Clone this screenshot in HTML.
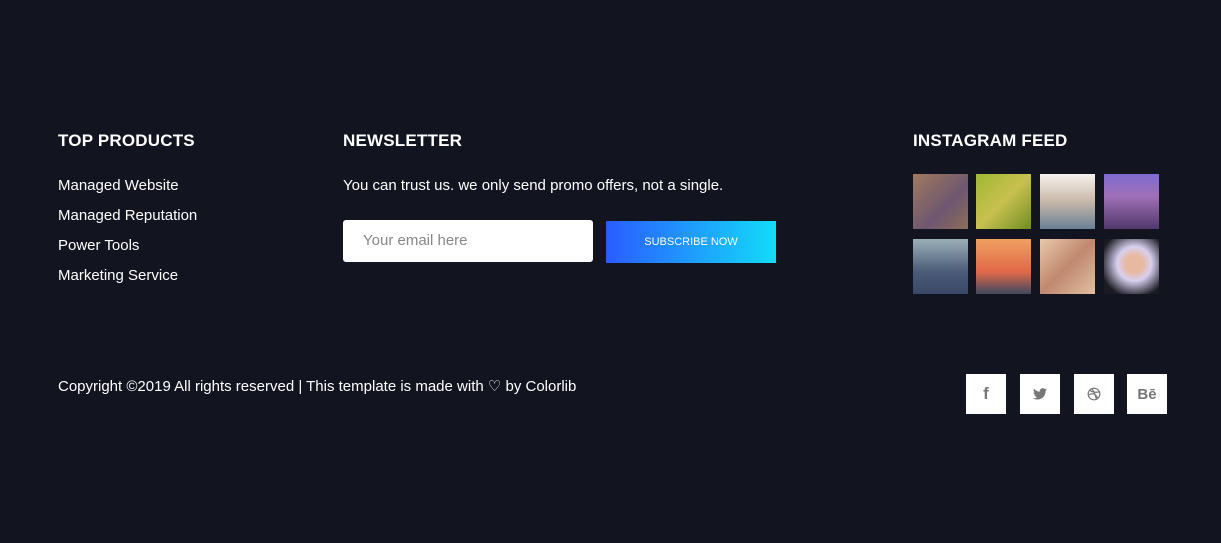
<!DOCTYPE html>
<html><head><meta charset="utf-8"><style>
*{margin:0;padding:0;box-sizing:border-box}
body{width:1221px;height:543px;background:#121420;font-family:"Liberation Sans",sans-serif;color:#fff;position:relative;overflow:hidden}
h4{position:absolute;top:131px;font-size:17px;font-weight:bold;letter-spacing:0.2px}
.a{position:absolute;font-size:15px;color:#fff}
.img{position:absolute;width:55px;height:55px}
.s{position:absolute;top:374px;width:40px;height:40px;background:#fff;color:#777;display:flex;align-items:center;justify-content:center;font-weight:bold;font-size:15px}
</style></head><body>
<h4 style="left:58px">TOP PRODUCTS</h4>
<div class="a" style="left:58px;top:177px">Managed Website</div>
<div class="a" style="left:58px;top:207px">Managed Reputation</div>
<div class="a" style="left:58px;top:237px">Power Tools</div>
<div class="a" style="left:58px;top:267px">Marketing Service</div>

<h4 style="left:343px">NEWSLETTER</h4>
<div class="a" style="left:343px;top:177px">You can trust us. we only send promo offers, not a single.</div>
<div style="position:absolute;left:343px;top:220px;width:250px;height:42px;background:#fff;border-radius:3px;color:#888;font-size:15px;padding:12px 0 0 20px">Your email here</div>
<div style="position:absolute;left:606px;top:221px;width:170px;height:42px;background:linear-gradient(90deg,#2a5cff,#12dcf8);font-size:11px;display:flex;align-items:center;justify-content:center">SUBSCRIBE NOW</div>

<h4 style="left:913px">INSTAGRAM FEED</h4>
<div class="img" style="left:913px;top:174px;background:linear-gradient(135deg,#a07a5e,#6e5670 60%,#8d6e56)"></div>
<div class="img" style="left:976px;top:174px;background:linear-gradient(135deg,#9fb830,#c8c050 50%,#6f8e20)"></div>
<div class="img" style="left:1040px;top:174px;background:linear-gradient(180deg,#f6f2ee,#c8b8a8 50%,#6a8098)"></div>
<div class="img" style="left:1104px;top:174px;background:linear-gradient(180deg,#7e6ad0,#a070b8 40%,#50386a)"></div>
<div class="img" style="left:913px;top:239px;background:linear-gradient(180deg,#9ab0b8,#4a5a78 60%,#3a4868)"></div>
<div class="img" style="left:976px;top:239px;background:linear-gradient(180deg,#f0a060,#e06848 60%,#404860)"></div>
<div class="img" style="left:1040px;top:239px;background:linear-gradient(135deg,#e8c8a8,#c08870 50%,#e0c0a0)"></div>
<div class="img" style="left:1104px;top:239px;background:radial-gradient(circle at 55% 45%,#e8b8a0 20%,#d8d0f0 40%,#1a1a22 80%)"></div>

<div class="a" style="left:58px;top:377px">Copyright ©2019 All rights reserved | This template is made with <span style="font-size:15px">♡</span> by Colorlib</div>
<div class="s" style="left:966px;font-size:17px">f</div>
<div class="s" style="left:1020px"><svg width="14" height="12" viewBox="0 0 24 20"><path fill="#777" d="M24 2.4a10 10 0 0 1-2.8.8A5 5 0 0 0 23.3.4a10 10 0 0 1-3.1 1.2A4.9 4.9 0 0 0 11.8 6 14 14 0 0 1 1.7.9a4.9 4.9 0 0 0 1.5 6.6A5 5 0 0 1 1 6.9a4.9 4.9 0 0 0 3.9 4.8 5 5 0 0 1-2.2.1 4.9 4.9 0 0 0 4.6 3.4A9.9 9.9 0 0 1 0 17.3 14 14 0 0 0 7.5 19.5c9 0 14-7.5 14-14v-.6A10 10 0 0 0 24 2.4z"/></svg></div>
<div class="s" style="left:1074px"><svg width="14" height="14" viewBox="0 0 24 24" fill="none" stroke="#777" stroke-width="2"><circle cx="12" cy="12" r="10"/><path d="M4 5c5 4 11 5 18 3M2.5 14c6-4 12-4 16 6M8 2.5c4 5 7 12 8 19"/></svg></div>
<div class="s" style="left:1127px">Bē</div>
</body></html>
